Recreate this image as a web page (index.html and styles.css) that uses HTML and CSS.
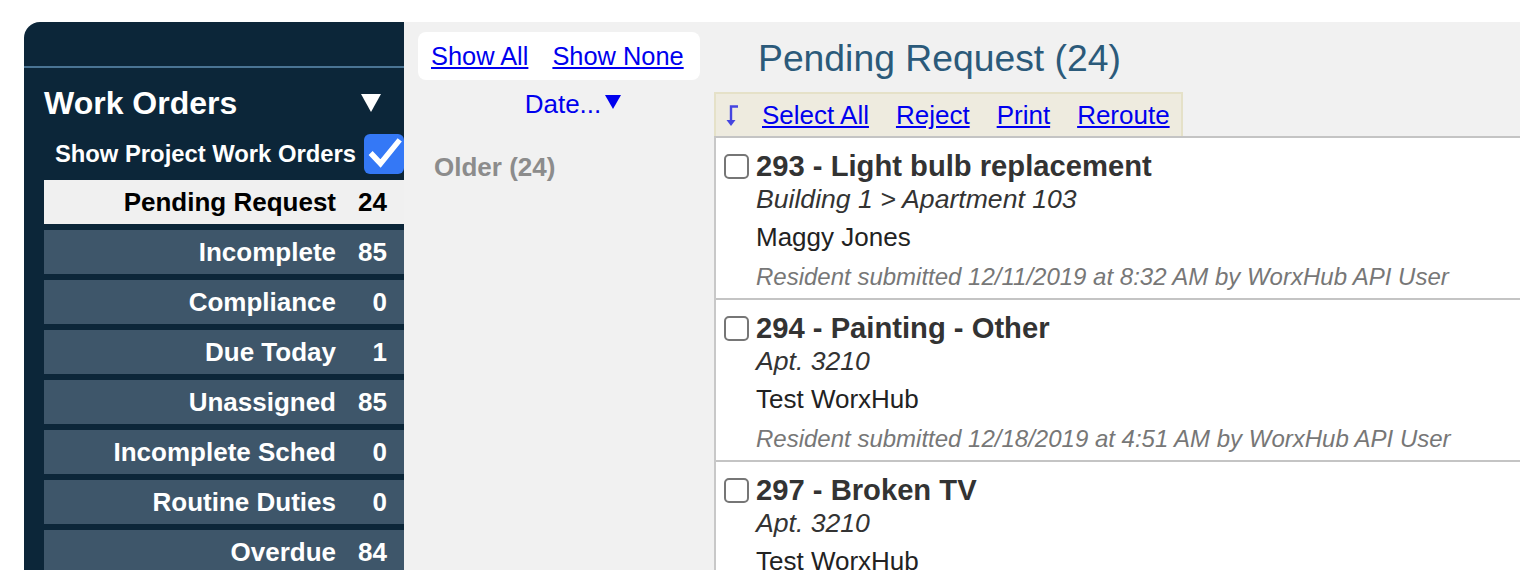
FILE: index.html
```html
<!DOCTYPE html>
<html lang="en">
<head>
<meta charset="utf-8">
<title>Work Orders</title>
<link rel="stylesheet" href="styles.css">
</head>
<body>
<div class="app">
  <aside class="sidebar">
    <div class="sb-top"></div>
    <div class="sb-head">
      <span class="sb-title">Work Orders</span>
      <svg class="sb-caret" width="22" height="20" viewBox="0 0 22 20"><polygon points="1,1 21,1 11,19" fill="#ffffff"/></svg>
    </div>
    <div class="sb-project">
      <span class="sb-project-label">Show Project Work Orders</span>
      <span class="sb-check"><svg width="40" height="40" viewBox="0 0 40 40"><polyline points="8.5,21 16.5,29.5 34,8" fill="none" stroke="#ffffff" stroke-width="5.5" stroke-linecap="square" stroke-linejoin="miter"/></svg></span>
    </div>
    <ul class="sb-list">
      <li class="sb-item active"><span class="sb-label">Pending Request</span><span class="sb-count">24</span></li>
      <li class="sb-item"><span class="sb-label">Incomplete</span><span class="sb-count">85</span></li>
      <li class="sb-item"><span class="sb-label">Compliance</span><span class="sb-count">0</span></li>
      <li class="sb-item"><span class="sb-label">Due Today</span><span class="sb-count">1</span></li>
      <li class="sb-item"><span class="sb-label">Unassigned</span><span class="sb-count">85</span></li>
      <li class="sb-item"><span class="sb-label">Incomplete Sched</span><span class="sb-count">0</span></li>
      <li class="sb-item"><span class="sb-label">Routine Duties</span><span class="sb-count">0</span></li>
      <li class="sb-item"><span class="sb-label">Overdue</span><span class="sb-count">84</span></li>
    </ul>
  </aside>
  <main class="main">
    <section class="filters">
      <div class="show-box">
        <a href="#" class="link">Show All</a>
        <a href="#" class="link">Show None</a>
      </div>
      <div class="sort">
        <a href="#" class="link">Date...</a><svg class="sort-caret" width="16" height="14" viewBox="0 0 16 14"><polygon points="0,0 16,0 8,14" fill="#0000ee"/></svg>
      </div>
      <div class="group">Older (24)</div>
    </section>
    <section class="content">
      <h1 class="title">Pending Request (24)</h1>
      <div class="toolbar">
        <svg class="tb-icon" width="14" height="24" viewBox="0 0 14 24"><path d="M14 3.5 H7 V19" fill="none" stroke="#4545e0" stroke-width="2.4"/><polygon points="2.5,17 11.5,17 7,23" fill="#4545e0"/></svg>
        <a href="#" class="link">Select All</a>
        <a href="#" class="link">Reject</a>
        <a href="#" class="link">Print</a>
        <a href="#" class="link">Reroute</a>
      </div>
      <div class="list">
        <div class="item">
          <div class="cb-col"><input type="checkbox" class="cb"></div>
          <div class="item-body">
            <div class="item-title">293 - Light bulb replacement</div>
            <div class="item-loc">Building 1 &gt; Apartment 103</div>
            <div class="item-name">Maggy Jones</div>
            <div class="item-meta">Resident submitted 12/11/2019 at 8:32 AM by WorxHub API User</div>
          </div>
        </div>
        <div class="item">
          <div class="cb-col"><input type="checkbox" class="cb"></div>
          <div class="item-body">
            <div class="item-title">294 - Painting - Other</div>
            <div class="item-loc">Apt. 3210</div>
            <div class="item-name">Test WorxHub</div>
            <div class="item-meta">Resident submitted 12/18/2019 at 4:51 AM by WorxHub API User</div>
          </div>
        </div>
        <div class="item">
          <div class="cb-col"><input type="checkbox" class="cb"></div>
          <div class="item-body">
            <div class="item-title">297 - Broken TV</div>
            <div class="item-loc">Apt. 3210</div>
            <div class="item-name">Test WorxHub</div>
          </div>
        </div>
      </div>
    </section>
  </main>
</div>
</body>
</html>
```

FILE: styles.css
```css
* { box-sizing: border-box; }

html, body {
  margin: 0;
  padding: 0;
  height: 570px;
  overflow: hidden;
  background: #ffffff;
  font-family: "Liberation Sans", Arial, Helvetica, sans-serif;
}

.app {
  display: flex;
  margin-top: 22px;
  padding-left: 24px;
  height: 548px;
}

/* Sidebar */
.sidebar {
  width: 380px;
  flex: none;
  background: #0c2639;
  border-top-left-radius: 16px;
  overflow: hidden;
}

.sb-top {
  height: 46px;
  border-bottom: 2px solid #4a7494;
}

.sb-head {
  display: flex;
  align-items: center;
  justify-content: space-between;
  height: 40px;
  margin-top: 15px;
  padding: 0 22px 0 20px;
}

.sb-title {
  color: #ffffff;
  font-weight: bold;
  font-size: 32px;
  line-height: 40px;
}

.sb-caret { display: block; }

.sb-project {
  display: flex;
  align-items: center;
  justify-content: flex-end;
  gap: 8px;
  height: 40px;
  margin-top: 11px;
}

.sb-project-label {
  color: #ffffff;
  font-weight: bold;
  font-size: 23.8px;
  line-height: 40px;
}

.sb-check {
  width: 40px;
  height: 40px;
  border-radius: 6px;
  background: #3478f6;
  display: block;
}

.sb-check svg { display: block; }

.sb-list {
  list-style: none;
  margin: 6px 0 0 20px;
  padding: 0;
}

.sb-item {
  display: flex;
  justify-content: flex-end;
  align-items: center;
  height: 44px;
  margin-bottom: 6px;
  padding-right: 17px;
  background: #3e566a;
  color: #ffffff;
  font-weight: bold;
  font-size: 26px;
  line-height: 42px;
}

.sb-item.active {
  background: #f0f0f0;
  color: #000000;
}

.sb-count {
  width: 51px;
  text-align: right;
}

/* Main */
.main {
  flex: 1;
  display: flex;
  background: #f1f1f1;
  min-width: 0;
}

.link {
  color: #0000ee;
  text-decoration: underline;
  font-size: 26px;
  white-space: nowrap;
}

.filters {
  width: 310px;
  flex: none;
}

.show-box {
  display: flex;
  align-items: center;
  gap: 24px;
  height: 48px;
  margin: 10px 14px 0;
  padding: 0 12px 0 13px;
  background: #ffffff;
  border-radius: 8px;
}

.show-box .link {
  flex: none;
  font-size: 25.4px;
}

.sort {
  margin-top: 9px;
  height: 30px;
  line-height: 30px;
  text-align: center;
  padding-left: 28px;
}

.sort .link { text-decoration: none; }

.sort-caret {
  margin-left: 4px;
  vertical-align: 4px;
}

.group {
  margin-top: 33px;
  padding-left: 30px;
  line-height: 30px;
  color: #8c8c8c;
  font-weight: bold;
  font-size: 26px;
}

.content {
  flex: 1;
  min-width: 0;
}

.title {
  margin: 0;
  padding: 3px 0 0 44px;
  height: 70px;
  line-height: 67px;
  font-weight: normal;
  font-size: 37.3px;
  color: #2b5a7a;
}

.toolbar {
  display: inline-flex;
  align-items: center;
  gap: 27px;
  height: 44px;
  padding: 0 11px 0 8px;
  background: #eeebdf;
  border: 2px solid #e5e1c8;
  border-bottom: none;
}

.tb-icon {
  display: block;
  margin-right: -3px;
}

.list {
  background: #ffffff;
  border-top: 2px solid #c4c4c4;
  border-left: 2px solid #c8c8c8;
}

.item {
  display: flex;
  gap: 7px;
  padding: 11px 0 6px 8px;
  border-bottom: 2px solid #c4c4c4;
}

.cb-col {
  height: 34px;
  display: flex;
  align-items: center;
  flex: none;
}

.cb {
  appearance: none;
  -webkit-appearance: none;
  margin: 0;
  width: 25px;
  height: 25px;
  border: 2px solid #767676;
  border-radius: 5px;
  background: #ffffff;
}

.item-body { min-width: 0; }

.item-title {
  font-weight: bold;
  font-size: 29.2px;
  line-height: 34px;
  color: #333333;
}

.item-loc {
  font-style: italic;
  font-size: 26.6px;
  line-height: 32px;
  color: #333333;
}

.item-name {
  margin-top: 6px;
  font-size: 26px;
  line-height: 32px;
  color: #222222;
}

.item-meta {
  margin-top: 9px;
  font-style: italic;
  font-size: 24px;
  line-height: 30px;
  color: #777777;
}
```
